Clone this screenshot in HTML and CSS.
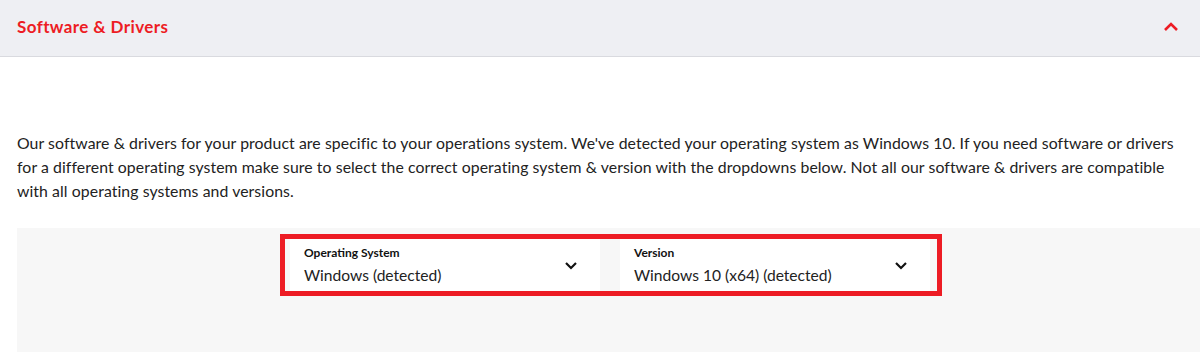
FILE: index.html
```html
<!DOCTYPE html>
<html lang="en">
<head>
    <meta charset="UTF-8">
    <meta name="viewport" content="width=device-width, initial-scale=1.0">
    <title>Software &amp; Drivers</title>
    <link rel="stylesheet" href="styles.css">
</head>
<body>
<div class="accordion">
    <div class="accordion-header">
        <h2>Software &amp; Drivers</h2>
        <svg class="chevron-up" width="16" height="10" viewBox="0 0 16 10">
            <path d="M2 8 L8 2 L14 8" fill="none" stroke="#ed1c24" stroke-width="2.6"/>
        </svg>
    </div>
    <div class="accordion-body">
        <p class="intro">Our software &amp; drivers for your product are specific to your operations system. We've detected your operating system as Windows 10. If you need software or drivers for a different operating system make sure to select the correct operating system &amp; version with the dropdowns below. Not all our software &amp; drivers are compatible with all operating systems and versions.</p>

        <div class="filter-panel">
            <div class="filter-box">
                <div class="select">
                    <div class="select-text">
                        <span class="select-label">Operating System</span>
                        <span class="select-value">Windows (detected)</span>
                    </div>
                    <svg class="chevron-down" width="14" height="9" viewBox="0 0 14 9">
                        <path d="M2 2 L7 7 L12 2" fill="none" stroke="#111" stroke-width="2.2"/>
                    </svg>
                </div>
                <div class="select">
                    <div class="select-text">
                        <span class="select-label">Version</span>
                        <span class="select-value">Windows 10 (x64) (detected)</span>
                    </div>
                    <svg class="chevron-down" width="14" height="9" viewBox="0 0 14 9">
                        <path d="M2 2 L7 7 L12 2" fill="none" stroke="#111" stroke-width="2.2"/>
                    </svg>
                </div>
            </div>
        </div>
    </div>
</div>
</body>
</html>
```

FILE: styles.css
```css
body {
    margin: 0;
    font-family: "Lato", "Liberation Sans", sans-serif;
    background-color: #ffffff;
    color: #222222;
    overflow: hidden;
}

.accordion-header {
    display: flex;
    justify-content: space-between;
    align-items: center;
    height: 56px;
    padding: 0 21px 0 17px;
    background-color: #eeeff3;
    border-bottom: 1px solid #d9dadf;
}

.accordion-header h2 {
    margin: 0;
    margin-top: -3px;
    font-size: 17px;
    font-weight: 700;
    letter-spacing: 0.4px;
    color: #ed1c24;
}

.chevron-up {
    margin-top: -2px;
}

.accordion-body {
    padding: 74px 0 0 17px;
}

.intro {
    margin: 0 17px 0 0;
    font-size: 15.8px;
    line-height: 24px;
    letter-spacing: 0.08px;
    color: #222222;
}

.filter-panel {
    display: flex;
    justify-content: center;
    margin-top: 25px;
    padding: 6px 0 60px 5px;
    background-color: #f7f7f7;
}

.filter-box {
    display: flex;
    gap: 20px;
    padding: 0 7px 0 5px;
    border: 5px solid #ed1c24;
}

.select {
    display: flex;
    align-items: center;
    justify-content: space-between;
    width: 310px;
    height: 52px;
    padding: 0 22px 0 14px;
    box-sizing: border-box;
    background-color: #ffffff;
}

.select-text {
    display: flex;
    flex-direction: column;
}

.select-label {
    font-size: 12px;
    font-weight: 700;
    color: #111111;
    margin-top: -2px;
    margin-bottom: 6px;
}

.select-value {
    font-size: 15.6px;
    color: #222222;
}

.chevron-down {
    margin-top: 0;
}
```
